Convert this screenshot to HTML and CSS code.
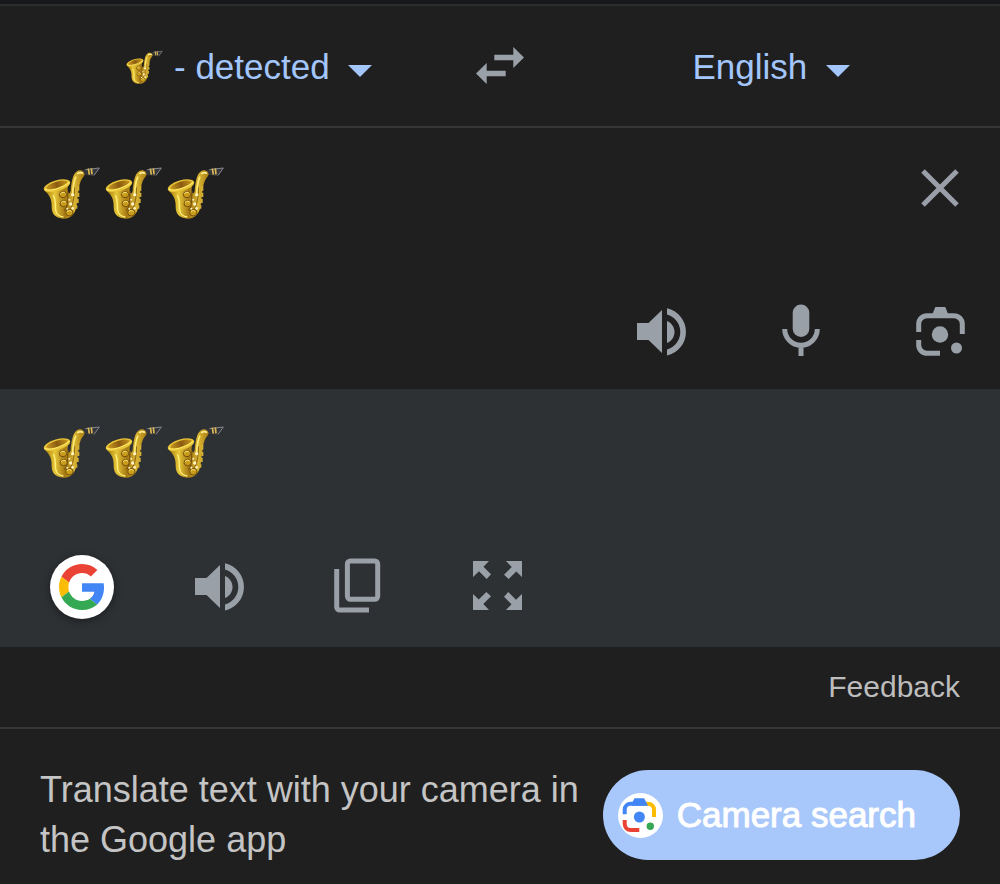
FILE: index.html
```
<!DOCTYPE html>
<html lang="en">
<head>
  <meta charset="UTF-8">
  <meta name="viewport" content="width=device-width, initial-scale=1.0">
  <title>Translate</title>
  <link rel="stylesheet" href="styles.css">
</head>
<body>
  <!-- Shared shapes -->
  <svg class="defs" aria-hidden="true">
    <defs>
      <linearGradient id="gold" x1="0" y1="0" x2="1" y2="0">
        <stop offset="0" stop-color="#a67c0c"/>
        <stop offset=".25" stop-color="#e6c638"/>
        <stop offset=".5" stop-color="#a67a14"/>
        <stop offset=".75" stop-color="#d8b432"/>
        <stop offset="1" stop-color="#a87b12"/>
      </linearGradient>
      <linearGradient id="bell" x1="0" y1="0" x2="1" y2="0">
        <stop offset="0" stop-color="#c99a22"/>
        <stop offset=".5" stop-color="#8a5a10"/>
        <stop offset="1" stop-color="#c8971f"/>
      </linearGradient>
    </defs>

    <symbol id="sax" viewBox="0 0 186 186">
      <path d="M128 31l20-7 32-1-18 26-32-5z" fill="#34353a"/>
      <path d="M136 29l42-5-16 22" fill="none" stroke="#85878e" stroke-width="3"/>
      <path d="M145 26l3 18M154 25l2 18" stroke="#dcb952" stroke-width="5"/>
      <path d="M14 92C30 106 36 120 35 142c0 22 14 33 35 34 22 1 34-13 39-34 5-26 4-54 13-78 3-9 8-12 12-20 0-9-12-17-22-11-15 9-18 37-20 59-2 10-7 10-9 3-2-8 2-18 5-31z" fill="url(#gold)"/>
      <path d="M40 106c9 16 5 31 7 44 2 12 11 20 23 21" fill="none" stroke="#fff07a" stroke-width="4"/>
      <path d="M84 94c-3 24 3 46-11 58" fill="none" stroke="#7d570e" stroke-width="4"/>
      <path d="M103 82c1 28-4 62-22 78" fill="none" stroke="#8a6114" stroke-width="3"/>
      <path d="M108 50c-8 15-9 32-10 50" fill="none" stroke="#ffec77" stroke-width="5"/>
      <path d="M112 42c5-6 13-5 17-1" fill="none" stroke="#fff09a" stroke-width="5"/>
      <ellipse cx="51" cy="77" rx="41" ry="16" transform="rotate(-16 51 77)" fill="#e7c337"/>
      <ellipse cx="52" cy="76" rx="34" ry="11" transform="rotate(-16 52 76)" fill="url(#bell)"/>
      <path d="M14 87c9 9 55-2 73-20" fill="none" stroke="#ffea62" stroke-width="4"/>
      <g fill="#c99c1c" stroke="#74500c" stroke-width="3">
        <ellipse cx="69" cy="104" rx="11" ry="9"/>
        <ellipse cx="71" cy="131" rx="11" ry="9"/>
        <ellipse cx="88" cy="158" rx="11" ry="10"/>
      </g>
      <g fill="none" stroke="#ffec7a" stroke-width="3">
        <path d="M61 101c5-6 12-5 15-1"/>
        <path d="M63 128c5-6 12-5 15-1"/>
        <path d="M81 155c5-5 11-4 13 0"/>
      </g>
      <g fill="#fff3c0">
        <circle cx="98" cy="104" r="5"/>
        <circle cx="88" cy="119" r="3"/>
        <circle cx="92" cy="132" r="5"/>
        <circle cx="98" cy="145" r="4"/>
        <circle cx="82" cy="146" r="3"/>
      </g>
      <path d="M115 78v14M115 98v13M113 116v13M109 136v10" stroke="#d5ae34" stroke-width="6"/>
    </symbol>

    <symbol id="caret" viewBox="0 0 24 12">
      <path d="M0 0h24L12 12z"/>
    </symbol>

    <symbol id="speaker" viewBox="0 0 64 64">
      <path d="M7 23h11.5L32 10v43L18.5 40H7z"/>
      <path d="M37 21c4.5 2 7.5 6 7.5 11s-3 9-7.5 11z"/>
      <path d="M37 8.2a24.3 24.3 0 0 1 0 47.4v-6a18.3 18.3 0 0 0 0-35.2z"/>
    </symbol>
  </svg>

  <div class="translate">
    <header class="languages">
      <div class="language source-language">
        <svg class="sax-small" role="img" aria-label="Saxophone"><use href="#sax"/></svg>
        <select aria-label="Source language">
          <option>- detected</option>
        </select>
        <svg class="caret" aria-hidden="true"><use href="#caret"/></svg>
      </div>
      <button class="icon-button" type="button" aria-label="Swap languages">
        <svg class="icon" viewBox="0 0 64 64">
          <path d="M26.3 20.7h19V13L56 23.5 45.3 34v-7.7h-19z"/>
          <path d="M37.7 36.7h-19V29L8 39.5 18.7 50v-7.7h19z"/>
        </svg>
      </button>
      <div class="language target-language">
        <select aria-label="Target language">
          <option>English</option>
        </select>
        <svg class="caret" aria-hidden="true"><use href="#caret"/></svg>
      </div>
    </header>

    <section class="source">
      <div class="source-top">
        <div class="phrase source-phrase" role="img" aria-label="Three saxophones">
          <svg class="sax"><use href="#sax"/></svg>
          <svg class="sax"><use href="#sax"/></svg>
          <svg class="sax"><use href="#sax"/></svg>
        </div>
        <button class="icon-button" type="button" aria-label="Clear text">
          <svg class="icon" viewBox="0 0 64 64">
            <path class="line" d="M15 15l34 34M49 15L15 49"/>
          </svg>
        </button>
      </div>
      <div class="actions source-actions">
        <button class="icon-button" type="button" aria-label="Listen">
          <svg class="icon"><use href="#speaker"/></svg>
        </button>
        <button class="icon-button" type="button" aria-label="Speak">
          <svg class="icon" viewBox="0 0 64 64">
            <rect x="23.7" y="4.5" width="16.6" height="32.5" rx="8.3"/>
            <path class="line" d="M15.7 29a16.3 16.3 0 0 0 32.6 0M32 46v10"/>
          </svg>
        </button>
        <button class="icon-button" type="button" aria-label="Search with camera">
          <svg class="icon" viewBox="0 0 64 64">
            <path d="M24.5 14l2.8-7h10l2.8 7z"/>
            <path class="line" d="M10.7 32v-8a8.3 8.3 0 0 1 8.3-8.3h27a8.3 8.3 0 0 1 8.3 8.3v10M10.7 40v5a8.3 8.3 0 0 0 8.3 8.3h13"/>
            <circle cx="32" cy="34.5" r="8.2"/>
            <circle cx="48.5" cy="48" r="5.5"/>
          </svg>
        </button>
      </div>
    </section>

    <section class="target">
      <div class="phrase" role="img" aria-label="Three saxophones">
        <svg class="sax"><use href="#sax"/></svg>
        <svg class="sax"><use href="#sax"/></svg>
        <svg class="sax"><use href="#sax"/></svg>
      </div>
      <div class="actions target-actions">
        <button class="icon-button google" type="button" aria-label="Search Google">
          <svg class="google-logo" viewBox="0 0 48 48">
            <path fill="#ea4335" d="M24 9.5c3.54 0 6.71 1.22 9.21 3.6l6.85-6.85C35.9 2.38 30.47 0 24 0 14.62 0 6.51 5.38 2.56 13.22l7.98 6.19C12.43 13.72 17.74 9.5 24 9.5z"/>
            <path fill="#4285f4" d="M46.98 24.55c0-1.57-.15-3.09-.38-4.55H24v9.02h12.94c-.58 2.96-2.26 5.48-4.78 7.18l7.73 6c4.51-4.18 7.09-10.36 7.09-17.65z"/>
            <path fill="#fbbc05" d="M10.53 28.59c-.48-1.45-.76-2.99-.76-4.59s.27-3.14.76-4.59l-7.98-6.19C.92 16.46 0 20.12 0 24c0 3.88.92 7.54 2.56 10.78l7.97-6.19z"/>
            <path fill="#34a853" d="M24 48c6.48 0 11.93-2.13 15.89-5.81l-7.73-6c-2.15 1.45-4.92 2.3-8.16 2.3-6.26 0-11.57-4.22-13.47-9.91l-7.98 6.19C6.51 42.62 14.62 48 24 48z"/>
          </svg>
        </button>
        <button class="icon-button" type="button" aria-label="Listen to translation">
          <svg class="icon"><use href="#speaker"/></svg>
        </button>
        <button class="icon-button" type="button" aria-label="Copy translation">
          <svg class="icon" viewBox="0 0 64 64">
            <rect class="line" x="21.4" y="6" width="30.3" height="38.3" rx="3"/>
            <path class="line" d="M10.7 14v38a3 3 0 0 0 3 3H43"/>
          </svg>
        </button>
        <button class="icon-button" type="button" aria-label="Full screen">
          <svg class="icon" viewBox="0 0 64 64">
            <path id="corner" d="M9 6h16l-5.5 5.7 7.5 7.6-4.3 4.7-7.7-7.7L9 22z"/>
            <use href="#corner" transform="rotate(90 33.5 30.5)"/>
            <use href="#corner" transform="rotate(180 33.5 30.5)"/>
            <use href="#corner" transform="rotate(270 33.5 30.5)"/>
          </svg>
        </button>
      </div>
    </section>

    <div class="feedback">
      <a href="#">Feedback</a>
    </div>

    <footer class="promo">
      <p>Translate text with your camera in the Google app</p>
      <button class="camera-search" type="button">
        <svg class="lens-logo" viewBox="0 0 45 45" aria-hidden="true">
          <circle cx="22.5" cy="22.5" r="22.5" fill="#fff"/>
          <g fill="none" stroke-width="4">
            <path stroke="#fbbc04" d="M27 10.7h3a6 6 0 0 1 6 6V24"/>
            <path stroke="#4285f4" d="M6.7 21.3v-4.6a6 6 0 0 1 6-6H27"/>
            <path stroke="#ea4335" d="M6.7 27v4a6 6 0 0 0 6 6h8.6"/>
          </g>
          <path fill="#4285f4" d="M14 10l2.5-4.7h9.6l4 7.4H14z"/>
          <circle cx="21.4" cy="24" r="5.5" fill="#4285f4"/>
          <circle cx="32.3" cy="33.3" r="3.7" fill="#34a853"/>
        </svg>
        <span>Camera search</span>
      </button>
    </footer>
  </div>
</body>
</html>
```

FILE: styles.css
```
body {
  margin: 0;
  background-color: #1f1f1f;
  color: #c4c4c4;
  font-family: "Liberation Sans", Arial, sans-serif;
}

.defs {
  position: absolute;
  width: 0;
  height: 0;
}

svg {
  display: block;
  flex: none;
}

button, select {
  padding: 0;
  border: none;
  background: none;
  font-family: inherit;
  cursor: pointer;
}

.translate {
  border-top: 4px solid #17181b;
}

/* Language bar */
.languages {
  display: grid;
  grid-template-columns: 1fr 64px 1fr;
  align-items: center;
  column-gap: 18px;
  padding: 28px 0;
  border-top: 2px solid #2c2d2f;
  border-bottom: 2px solid #353637;
}

.language {
  display: flex;
  justify-content: center;
  align-items: center;
  color: #a3c6fc;
}

.source-language {
  padding-left: 46px;
}

.target-language {
  padding-right: 8px;
}

.language select {
  appearance: none;
  color: inherit;
  font-size: 35px;
}

.sax-small {
  width: 40px;
  height: 40px;
  margin-right: 10px;
}

.caret {
  width: 24px;
  height: 12px;
  margin-top: 10px;
  margin-left: 18px;
  fill: #a3c6fc;
}

/* Icons */
.icon-button {
  display: flex;
  justify-content: center;
  align-items: center;
  width: 64px;
  height: 64px;
}

.icon {
  width: 64px;
  height: 64px;
  fill: #9aa0a8;
}

.icon .line {
  fill: none;
  stroke: #9aa0a8;
  stroke-width: 5px;
}

/* Source text */
.source {
  padding: 28px 28px 25px 40px;
}

.source-top {
  display: flex;
  justify-content: space-between;
  align-items: flex-start;
}

.phrase {
  display: flex;
}

.source-phrase {
  padding-top: 4px;
}

.sax {
  width: 62px;
  height: 62px;
}

.actions {
  display: flex;
}

.source-actions {
  justify-content: flex-end;
  gap: 75px;
  margin-top: 78px;
}

/* Translation */
.target {
  padding: 30px 40px 28px;
  background-color: #2e3134;
}

.target-actions {
  gap: 74px;
  margin-top: 74px;
  margin-left: 10px;
}

.google {
  border-radius: 50%;
  background-color: #fff;
  box-shadow: 0 2px 8px rgba(0, 0, 0, 0.4);
}

.google-logo {
  width: 46px;
  height: 46px;
}

/* Feedback */
.feedback {
  padding: 20px 40px;
  border-bottom: 2px solid #353637;
  font-size: 30px;
  line-height: 40px;
  text-align: right;
}

.feedback a {
  color: #bdbdbd;
  text-decoration: none;
}

/* App promo */
.promo {
  display: flex;
  justify-content: space-between;
  align-items: center;
  gap: 20px;
  padding: 36px 40px 19px;
}

.promo p {
  margin: 0;
  font-size: 36px;
  line-height: 50px;
}

.camera-search {
  display: flex;
  flex: none;
  align-items: center;
  gap: 14px;
  height: 90px;
  padding: 0 44px 0 15px;
  border-radius: 45px;
  background-color: #a8c7fa;
  color: #fff;
  font-size: 35px;
  -webkit-text-stroke: 1px #fff;
}

.lens-logo {
  width: 45px;
  height: 45px;
}
```
